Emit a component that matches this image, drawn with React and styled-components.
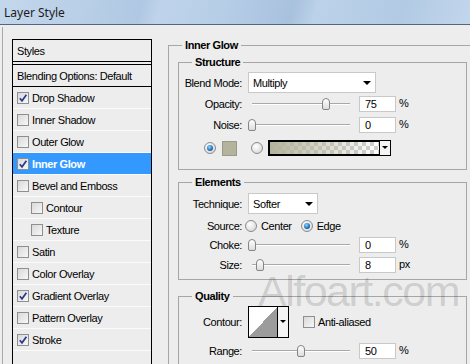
import styled, { createGlobalStyle } from 'styled-components';

const GlobalStyle = createGlobalStyle`
  html, body {
    margin: 0;
    padding: 0;
    background: #ededed;
  }
`;

const styleItems = [
  { label: 'Drop Shadow', checked: true },
  { label: 'Inner Shadow' },
  { label: 'Outer Glow' },
  { label: 'Inner Glow', checked: true, active: true },
  { label: 'Bevel and Emboss' },
  { label: 'Contour', sub: true },
  { label: 'Texture', sub: true },
  { label: 'Satin' },
  { label: 'Color Overlay' },
  { label: 'Gradient Overlay', checked: true },
  { label: 'Pattern Overlay' },
  { label: 'Stroke', checked: true },
  { label: '' },
];

const Checkbox = ({ checked }) => (
  <Box>
    {checked && (
      <svg width="10" height="10" viewBox="0 0 10 10">
        <path d="M1.8 5.2 L4 7.8 L8.4 1.8" fill="none" stroke="#2a3a8a" strokeWidth="1.7" />
      </svg>
    )}
  </Box>
);

const Slider = ({ value }) => (
  <Track>
    <Thumb $pos={value} />
  </Track>
);

const App = () => {
  return (
    <Window>
      <GlobalStyle />
      <TitleBar>Layer Style</TitleBar>
      <Body>
        <LeftPane>
          <StylesList>
            <ListHeader>Styles</ListHeader>
            <BlendingRow>Blending Options: Default</BlendingRow>
            {styleItems.map((item, i) => (
              <StyleRow key={i} $active={item.active} $sub={item.sub}>
                {item.label && <Checkbox checked={item.checked} />}
                {item.label}
              </StyleRow>
            ))}
          </StylesList>
        </LeftPane>

        <Main>
          <OuterGroup>
            <Legend $indent={4}>Inner Glow</Legend>

            <Group $pb={13}>
              <Legend $indent={13}>Structure</Legend>
              <Row $h={21} $mt={3}>
                <Label>Blend Mode:</Label>
                <Select $w={128}>Multiply</Select>
              </Row>
              <Row $h={16} $mt={3}>
                <Label>Opacity:</Label>
                <Slider value={0.75} />
                <NumField>75</NumField>
                <Unit>%</Unit>
              </Row>
              <Row $h={16} $mt={5}>
                <Label>Noise:</Label>
                <Slider value={0} />
                <NumField>0</NumField>
                <Unit>%</Unit>
              </Row>
              <ColorRow>
                <Radio $on />
                <ColorSwatch />
                <Radio style={{ marginLeft: 14 }} />
                <GradientPicker>
                  <GradientSwatch />
                  <PickerArrow />
                </GradientPicker>
              </ColorRow>
            </Group>

            <Group $pb={6} $mt={6}>
              <Legend $indent={13}>Elements</Legend>
              <Row $h={21} $mt={4}>
                <Label>Technique:</Label>
                <Select $w={70}>Softer</Select>
              </Row>
              <Row $h={14} $mt={5}>
                <Label $gap={3}>Source:</Label>
                <Radio />
                <RadioText>Center</RadioText>
                <Radio $on />
                <RadioText>Edge</RadioText>
              </Row>
              <Row $h={16} $mt={4}>
                <Label>Choke:</Label>
                <Slider value={0} />
                <NumField>0</NumField>
                <Unit>%</Unit>
              </Row>
              <Row $h={16} $mt={4}>
                <Label>Size:</Label>
                <Slider value={0.085} />
                <NumField>8</NumField>
                <Unit>px</Unit>
              </Row>
            </Group>

            <Group $pb={20} $mt={10}>
              <Legend $indent={13}>Quality</Legend>
              <Row $h={32} $mt={3}>
                <Label>Contour:</Label>
                <ContourPicker>
                  <ContourImage />
                  <PickerArrow $top />
                </ContourPicker>
                <CheckLabel>
                  <Checkbox />
                  Anti-aliased
                </CheckLabel>
              </Row>
              <Row $h={16} $mt={5}>
                <Label>Range:</Label>
                <Slider value={0.5} />
                <NumField>50</NumField>
                <Unit>%</Unit>
              </Row>
            </Group>
          </OuterGroup>
        </Main>
      </Body>
      <Watermark>Alfoart.com</Watermark>
    </Window>
  );
};

const Window = styled.div`
  position: relative;
  width: 470px;
  height: 364px;
  overflow: hidden;
  background: #ededed;
  font-family: "Liberation Sans", Arial, sans-serif;
  font-size: 11px;
  letter-spacing: -0.4px;
  color: #000;
`;

const TitleBar = styled.div`
  height: 24px;
  border-bottom: 1px solid #56667a;
  padding-left: 4px;
  display: flex;
  align-items: center;
  background: linear-gradient(
    105deg,
    #c3d7ec 0%,
    #b9cfe7 18%,
    #b0c8e3 30%,
    #bfd4eb 34%,
    #b6cde7 48%,
    #a8c1dd 62%,
    #bcd2ea 67%,
    #b2cae4 85%,
    #c2d6ec 100%
  );
  font-family: "Noto Sans", "Open Sans", sans-serif;
  font-size: 12px;
  letter-spacing: 0;
  color: #1c1c1c;
`;

const Body = styled.div`
  display: flex;
  padding-left: 2px;
`;

const LeftPane = styled.div`
  margin-top: 2px;
  padding: 12px 0 0 9px;
  height: 340px;
  border-left: 1px solid #a9a9a9;
`;

const StylesList = styled.div`
  width: 138px;
  border: 1px solid #000;
  border-bottom: none;
`;

const ListHeader = styled.div`
  height: 21px;
  display: flex;
  align-items: center;
  padding-left: 4px;
  border-bottom: 1px solid #000;
  margin-bottom: 2px;
`;

const BlendingRow = styled.div`
  height: 21px;
  display: flex;
  align-items: center;
  padding-left: 4px;
  border-top: 1px solid #000;
  border-bottom: 1px solid #000;
`;

const StyleRow = styled.div`
  height: 21px;
  display: flex;
  align-items: center;
  gap: 3px;
  padding-left: ${({ $sub }) => ($sub ? 18 : 4)}px;
  border-bottom: 1px solid #fbfbfb;
  background: ${({ $active }) => ($active ? '#3399ff' : 'transparent')};
  color: ${({ $active }) => ($active ? '#fff' : '#000')};
  font-weight: ${({ $active }) => ($active ? 'bold' : 'normal')};
`;

const Box = styled.span`
  flex: none;
  width: 10px;
  height: 10px;
  border: 1px solid #8e8f8f;
  background: linear-gradient(135deg, #d9d9d9, #f7f7f7);
  display: flex;
  align-items: center;
  justify-content: center;
`;

const Main = styled.div`
  margin-left: 16px;
  padding-top: 14px;
`;

const OuterGroup = styled.fieldset`
  margin: 0;
  width: 289px;
  padding: 4px 9px 0 9px;
  border: 1px solid #a6a6a6;
  border-right: none;
  height: 320px;
`;

const Group = styled.fieldset`
  margin: ${({ $mt }) => $mt || 0}px 0 0 0;
  padding: 0 0 ${({ $pb }) => $pb}px 0;
  border: 1px solid #a6a6a6;
  min-width: 0;
`;

const Legend = styled.legend`
  margin-left: ${({ $indent }) => $indent}px;
  padding: 0 3px;
  line-height: 13px;
  font-weight: bold;
`;

const Row = styled.div`
  display: flex;
  align-items: center;
  height: ${({ $h }) => $h}px;
  margin-top: ${({ $mt }) => $mt || 0}px;
`;

const Label = styled.span`
  flex: none;
  width: 63px;
  margin-right: ${({ $gap }) => ($gap === undefined ? 6 : $gap)}px;
  text-align: right;
`;

const Select = styled.div`
  position: relative;
  box-sizing: border-box;
  width: ${({ $w }) => $w}px;
  height: 21px;
  padding-left: 4px;
  display: flex;
  align-items: center;
  background: #fff;
  border: 1px solid #c9c9c9;

  &::after {
    content: '';
    position: absolute;
    right: 4px;
    top: 8px;
    border-left: 4px solid transparent;
    border-right: 4px solid transparent;
    border-top: 4px solid #000;
  }
`;

const Track = styled.div`
  position: relative;
  flex: none;
  width: 106px;
  height: 12px;

  &::before {
    content: '';
    position: absolute;
    left: 4px;
    right: 4px;
    top: 5px;
    height: 1px;
    background: #a9a9a9;
    border-bottom: 1px solid #fff;
  }
`;

const Thumb = styled.span`
  position: absolute;
  top: 0;
  left: ${({ $pos }) => `${$pos * 98}px`};
  box-sizing: border-box;
  width: 8px;
  height: 12px;
  border: 1px solid #858585;
  border-radius: 4px 4px 2px 2px;
  background: linear-gradient(to bottom, #ffffff, #dcdcdc);
`;

const NumField = styled.div`
  box-sizing: border-box;
  flex: none;
  width: 37px;
  height: 16px;
  margin-left: 5px;
  padding-left: 5px;
  display: flex;
  align-items: center;
  background: #fff;
  border: 1px solid #c9c9c9;
`;

const Unit = styled.span`
  margin-left: 3px;
  margin-top: -3px;
`;

const ColorRow = styled.div`
  display: flex;
  align-items: center;
  height: 16px;
  margin-top: 7px;
  padding-left: 25px;
`;

const Radio = styled.span`
  position: relative;
  flex: none;
  box-sizing: border-box;
  width: 12px;
  height: 12px;
  border-radius: 50%;
  border: 1px solid #8b8b8b;
  background: radial-gradient(circle at 40% 35%, #ffffff, #d0d0d0);

  &::after {
    content: '';
    display: ${({ $on }) => ($on ? 'block' : 'none')};
    position: absolute;
    left: 2px;
    top: 2px;
    width: 6px;
    height: 6px;
    border-radius: 50%;
    background: radial-gradient(circle at 40% 35%, #8fd6fb, #1b6fb8 60%, #0b3d78);
  }
`;

const RadioText = styled.span`
  margin-left: 4px;
  margin-right: 9px;
`;

const ColorSwatch = styled.span`
  flex: none;
  width: 15px;
  height: 15px;
  margin-left: 6px;
  box-sizing: border-box;
  border: 1px solid #9a9a8a;
  background: #b4b49c;
`;

const GradientPicker = styled.div`
  flex: none;
  display: flex;
  width: 123px;
  height: 16px;
  margin-left: 5px;
  box-sizing: border-box;
  border: 1px solid #000;
`;

const GradientSwatch = styled.span`
  flex: 1;
  border: 1px solid #000;
  background:
    linear-gradient(to right, #b4b49c, rgba(180, 180, 156, 0)),
    repeating-conic-gradient(#cfcfcf 0 25%, #ffffff 0 50%) 0 0 / 8px 8px;
`;

const PickerArrow = styled.span`
  position: relative;
  flex: none;
  width: 10px;
  background: #f4f4f4;

  &::after {
    content: '';
    position: absolute;
    left: 2px;
    top: ${({ $top }) => ($top ? 13 : 5)}px;
    border-left: 3px solid transparent;
    border-right: 3px solid transparent;
    border-top: 3px solid #000;
  }
`;

const ContourPicker = styled.div`
  flex: none;
  display: flex;
  width: 41px;
  height: 32px;
  box-sizing: border-box;
  border: 1px solid #000;
`;

const ContourImage = styled.span`
  flex: 1;
  border-right: 1px solid #000;
  background: linear-gradient(to bottom right, #ffffff 50%, #9c9c9c 50%);
`;

const CheckLabel = styled.label`
  display: flex;
  align-items: center;
  gap: 3px;
  margin-left: 14px;
`;

const Watermark = styled.div`
  position: absolute;
  left: 258px;
  top: 276px;
  font-family: "Liberation Sans", Arial, sans-serif;
  font-size: 43px;
  line-height: 31px;
  letter-spacing: -1.5px;
  color: rgba(0, 0, 0, 0.15);
  pointer-events: none;
`;

export default App;
